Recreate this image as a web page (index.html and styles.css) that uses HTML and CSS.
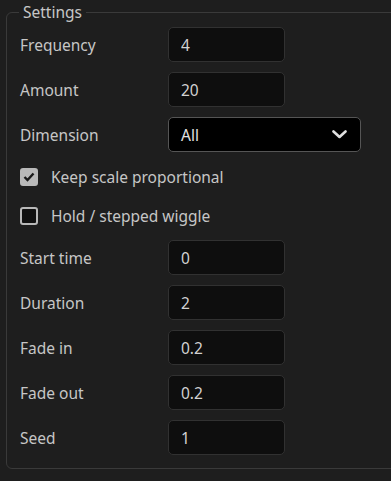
FILE: index.html
```html
<!DOCTYPE html>
<html lang="en">
<head>
<meta charset="UTF-8">
<meta name="viewport" content="width=device-width, initial-scale=1.0">
<title>Wiggle Settings</title>
<link rel="stylesheet" href="styles.css">
</head>
<body>

<fieldset class="settings">
  <legend>Settings</legend>

  <div class="row">
    <label for="frequency">Frequency</label>
    <input class="field" id="frequency" type="text" value="4">
  </div>
  <div class="row">
    <label for="amount">Amount</label>
    <input class="field" id="amount" type="text" value="20">
  </div>
  <div class="row">
    <label>Dimension</label>
    <div class="select">
      <span>All</span>
      <svg width="15" height="9" viewBox="0 0 15 9"><path d="M1.5 1.5 L7.5 7 L13.5 1.5" fill="none" stroke="#e0e0e0" stroke-width="2.6" stroke-linecap="round" stroke-linejoin="round"/></svg>
    </div>
  </div>

  <!-- checkboxes -->
  <div class="check-row">
    <span class="box checked">
      <svg width="12" height="10" viewBox="0 0 12 10"><path d="M1.5 5 L4.5 8 L10.5 1.5" fill="none" stroke="#1a1a1a" stroke-width="2.4"/></svg>
    </span>
    <span class="check-label">Keep scale proportional</span>
  </div>
  <div class="check-row">
    <span class="box"></span>
    <span class="check-label">Hold / stepped wiggle</span>
  </div>

  <div class="row">
    <label for="start">Start time</label>
    <input class="field" id="start" type="text" value="0">
  </div>
  <div class="row">
    <label for="duration">Duration</label>
    <input class="field" id="duration" type="text" value="2">
  </div>
  <div class="row">
    <label for="fadein">Fade in</label>
    <input class="field" id="fadein" type="text" value="0.2">
  </div>
  <div class="row">
    <label for="fadeout">Fade out</label>
    <input class="field" id="fadeout" type="text" value="0.2">
  </div>
  <div class="row">
    <label for="seed">Seed</label>
    <input class="field" id="seed" type="text" value="1">
  </div>
</fieldset>

</body>
</html>
```

FILE: styles.css
```css
html, body { background: #1e1e1e; }
body { margin: 0; padding: 1px 0 0 6px; overflow: hidden; font-family: "Noto Sans", sans-serif; font-size: 15.5px; color: #c6c6c6; }

.settings { width: 400px; margin: 0; padding: 4px 0 13px 13px; border: 1px solid #3a3a3a; border-radius: 6px; box-sizing: border-box; display: flex; flex-direction: column; gap: 10px; }
.settings legend { padding: 0 4px; margin-left: -1px; color: #c6c6c6; font-size: 15.5px; }

.row { display: flex; align-items: center; height: 35px; }
.row label { width: 148px; flex: none; }

.field { width: 117px; height: 35px; box-sizing: border-box; padding: 0 12px; background: #0e0e0e; border: 1px solid #313131; border-radius: 5px; color: #d2d2d2; font-family: inherit; font-size: 15.5px; outline: none; }

.select { width: 193px; height: 35px; box-sizing: border-box; padding: 0 13px 0 12px; background: #000; border: 1px solid #555; border-radius: 5px; color: #e2e2e2; display: flex; align-items: center; justify-content: space-between; }

.check-row { display: flex; align-items: center; height: 29px; gap: 13px; }
.box { width: 18px; height: 18px; box-sizing: border-box; border: 2px solid #b9b9b9; border-radius: 3px; background: #111; display: flex; align-items: center; justify-content: center; }
.box.checked { background: #b9b9b9; }
```
